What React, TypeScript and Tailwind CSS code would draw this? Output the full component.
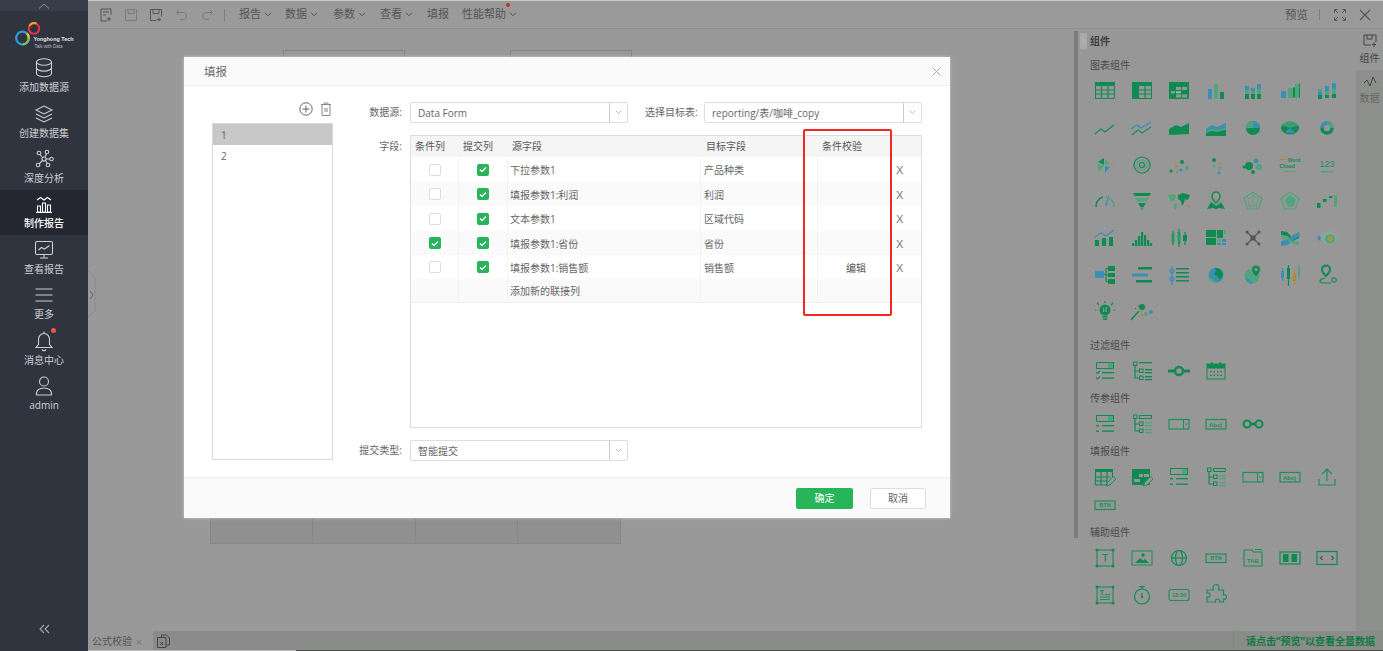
import React from "react";

const G = "#0f8b52", B = "#3a8fb5", L = "#4da67c", E = "#1b8f5c", K = "#565656", W = "#979797";
type P = { children: React.ReactNode };
const S = ({ children }: P) => (
  <svg width="24" height="24" viewBox="0 0 24 24" fill="none" stroke="none">{children}</svg>
);
const Ln = ({ d, c = G, w = 1.2 }: { d: string; c?: string; w?: number }) => <path d={d} stroke={c} strokeWidth={w} fill="none" />;
const F = ({ d, c = G }: { d: string; c?: string }) => <path d={d} fill={c} />;
const R = ({ x, y, w, h, c = G }: { x: number; y: number; w: number; h: number; c?: string }) => <rect x={x} y={y} width={w} height={h} fill={c} />;
const O = ({ x, y, r, c = G }: { x: number; y: number; r: number; c?: string }) => <circle cx={x} cy={y} r={r} fill={c} />;
const Ring = ({ x, y, r, c = G, w = 1.2 }: { x: number; y: number; r: number; c?: string; w?: number }) => <circle cx={x} cy={y} r={r} stroke={c} strokeWidth={w} fill="none" />;
const Tx = ({ x, y, s, t, c = G, b = true }: { x: number; y: number; s: number; t: string; c?: string; b?: boolean }) => (
  <text x={x} y={y} fontSize={s} fill={c} textAnchor="middle" fontWeight={b ? 700 : 400} fontFamily="Liberation Sans, sans-serif">{t}</text>
);

const DropList = () => (
  <S><rect x="3.5" y="3.5" width="17" height="6" stroke={G} /><R x={15} y={4} w={5} h={5} c={L} />
    <Ln d="M3 13l1.5 1.5L7 12M3 18.5l1.5 1.5L7 17.5" /><R x={9} y={13} w={12} h={1.3} /><R x={9} y={18.5} w={12} h={1.3} /></S>
);
const DropList2 = () => (
  <S><rect x="3.5" y="3.5" width="17" height="6" stroke={G} /><R x={15} y={4} w={5} h={5} c={L} />
    <R x={3} y={13} w={3} h={1.3} /><R x={9} y={13} w={12} h={1.3} /><R x={3} y={18.5} w={3} h={1.3} /><R x={9} y={18.5} w={12} h={1.3} /></S>
);
const TreeL = ({ thin = false }: { thin?: boolean }) => (
  <S><rect x="3.5" y="3" width="3.5" height="3.5" stroke={G} /><rect x="9.5" y="10" width="3.5" height="3.5" stroke={G} /><rect x="9.5" y="17" width="3.5" height="3.5" stroke={G} />
    <Ln d="M5 6.5V19h4.5M5 12h4.5" />
    {thin ? <rect x="9.5" y="3.5" width="12" height="3" stroke={G} /> : <R x={9} y={3} w={13} h={1.3} />}
    <R x={15} y={10} w={7} h={1.3} c={thin ? L : G} /><R x={15} y={13} w={7} h={1.3} c={thin ? L : G} /><R x={15} y={17} w={7} h={1.3} c={thin ? L : G} /><R x={15} y={20} w={7} h={1.3} c={thin ? L : G} /></S>
);
const Combo = () => (
  <S><rect x="2" y="7.5" width="20" height="9.5" stroke={E} strokeWidth="1.2" /><path d="M16.5 7.5v9.5" stroke={E} /><path d="M18.3 11.5l1.2 1.2 1.2-1.2" stroke={G} /></S>
);
const Abc = () => (
  <S><rect x="2" y="7.5" width="20" height="9.5" stroke={E} strokeWidth="1.2" /><Tx x={11.5} y={14.5} s={6} t="Abc|" c={E} /></S>
);
const Btn = ({ t = "BTN" }: { t?: string }) => (
  <S><rect x="2" y="8" width="20" height="8.5" stroke={E} strokeWidth="1.2" /><Tx x={12} y={14.2} s={5.5} t={t} c={E} /></S>
);
const Handles = ({ children }: P) => (
  <S><rect x="4" y="4" width="16" height="16" stroke={G} />{[[4, 4], [20, 4], [4, 20], [20, 20]].map(([x, y]) => <O key={x + "-" + y} x={x} y={y} r={1.5} />)}{children}</S>
);
const Globe = ({ c = G }: { c?: string }) => (
  <S><Ring x={12} y={12} r={7.5} c={c} /><ellipse cx="12" cy="12" rx="3.5" ry="7.5" stroke={c} strokeWidth="1.2" /><Ln d="M4.5 12h15" c={c} /></S>
);
const TablePen = ({ cross = false }: { cross?: boolean }) => (
  <S><R x={2} y={4} w={18} h={3} />
    {cross ? <><R x={2} y={7} w={18} h={13} /><R x={9} y={9} w={4} h={3} c={W} /><R x={14} y={9} w={5} h={3} c={W} /><R x={4} y={14} w={6} h={3} c={W} /></> :
      <Ln d="M2.5 7v13h12M2.5 12h15M2.5 16h12M8 7v13M14 7v13M19.5 7v5" />}
    <path d="M13.5 21l1-3.5 6-6 2.5 2.5-6 6z" fill={W} stroke={E} /></S>
);

const chartIcons = [
  <S><rect x="2.5" y="3.5" width="19" height="16" stroke={G} /><R x={2} y={3} w={20} h={4} /><Ln d="M2.5 11h19M2.5 15h19M8.5 7v12M15 7v12" /></S>,
  <S><rect x="2.5" y="3.5" width="19" height="16" stroke={G} /><R x={2} y={3} w={20} h={4} /><R x={2} y={3} w={7} h={17} /><Ln d="M9 11h12M9 15h12M15 7v12" /></S>,
  <S><R x={2} y={3} w={20} h={17} /><R x={9} y={8} w={5} h={3} c={W} /><R x={15} y={8} w={5} h={3} c={W} /><R x={4} y={12} w={4} h={2.5} c={W} /><R x={9} y={12} w={5} h={2.5} c="#7fb79a" /><R x={15} y={15.5} w={5} h={3} c={W} /><R x={9} y={15.5} w={5} h={3} c={W} /></S>,
  <S><R x={4} y={10} w={4} h={10} c={B} /><R x={10} y={5} w={4} h={15} c={L} /><R x={16} y={13} w={4} h={7} /></S>,
  <S><R x={4} y={7} w={4} h={4} c={B} /><R x={4} y={11} w={4} h={4} c={L} /><R x={4} y={15} w={4} h={5} /><R x={10} y={9} w={4} h={3} c={B} /><R x={10} y={12} w={4} h={3} c={L} /><R x={10} y={15} w={4} h={5} /><R x={16} y={5} w={4} h={5} c={B} /><R x={16} y={10} w={4} h={5} c={L} /><R x={16} y={15} w={4} h={5} /></S>,
  <S><R x={3} y={12} w={5} h={7} c={B} /><R x={10} y={9} w={5} h={10} c={L} /><R x={17} y={5} w={4} h={14} c={L} /><F d="M15 9l2-1v10l-2 1z" /><F d="M21 5l1-1v14l-1 1z" /></S>,
  <S><R x={3} y={13} w={4} h={3} c={B} /><R x={3} y={16} w={4} h={4} /><R x={3} y={10} w={4} h={3} c={L} /><R x={10} y={7} w={4} h={5} c={B} /><R x={10} y={12} w={4} h={4} c={L} /><R x={10} y={16} w={4} h={3} /><R x={17} y={4} w={4} h={6} c={B} /><R x={17} y={10} w={4} h={5} c={L} /><R x={17} y={15} w={4} h={4} /></S>,
  <S><Ln d="M2 18l6-5 4 3 9-7" /></S>,
  <S><Ln d="M1 13l6-4 4 3 10-6" c={B} /><Ln d="M2 19l6-5 4 3 9-6" c={E} /></S>,
  <S><F d="M2 19v-6l7-4 5 2 8-4v11z" /></S>,
  <S><F d="M2 13l6-4 5 2 9-4v6l-9 2-5-1-6 3z" c={B} /><F d="M2 16l6-3 5 1 9-2v4l-9 1-5 0-6 1z" c={L} /><F d="M2 17l6-2 5 1 9-2v6H2z" /></S>,
  <S><O x={12} y={12} r={7} /><F d="M12 5a7 7 0 0 1 7 7h-7z" c={B} /><F d="M12 12H5a7 7 0 0 1 7-7z" c={L} /></S>,
  <S><ellipse cx="12" cy="12" rx="9" ry="6.5" fill={G} /><path d="M7 16l5-4 5 4a9 6.5 0 0 1-10 0z" fill={B} /><path d="M3.5 9.5a9 6 0 0 1 17 0L12 12z" fill={L} opacity=".7" /></S>,
  <S><circle cx="12" cy="12" r="5" stroke={G} strokeWidth="3.5" /><path d="M12 7a5 5 0 0 1 5 5" stroke={L} strokeWidth="3.5" /><path d="M7 12a5 5 0 0 1 5-5" stroke={B} strokeWidth="3.5" /></S>,
  <S><F d="M5 9l6-4v7z" /><F d="M4 11l7 2-5 6z" c={L} /><F d="M12 13l5 1-5 6z" c={B} /><F d="M12 6l5 5-5 1z" c={L} /><O x={19} y={11} r={1} c="#b08a3a" /></S>,
  <S><Ring x={12} y={12} r={8} /><Ring x={12} y={12} r={5.2} c={L} /><Ring x={12} y={12} r={2.5} /></S>,
  <S><O x={4} y={18} r={1.5} /><O x={9} y={13} r={1.5} c="#b08a3a" /><O x={15} y={9} r={2} /><O x={14} y={17} r={1.5} c={B} /><O x={20} y={15} r={2.2} c={L} /><O x={10} y={19} r={1.2} c={L} /></S>,
  <S><O x={10} y={7} r={2} /><O x={10} y={13} r={1.5} c={L} /><O x={16} y={10} r={1.5} c="#b08a3a" /><O x={16} y={15} r={1.5} c={L} /><O x={15} y={20} r={1.5} c={B} /></S>,
  <S><O x={8} y={13} r={4} /><O x={15} y={8} r={2.5} c={B} /><O x={18} y={14} r={3} c={L} /><O x={3} y={14} r={1.5} /><O x={12} y={19} r={2} /></S>,
  <S><Tx x={16} y={9} s={5} t="Word" /><Tx x={9} y={15} s={5.5} t="Cloud" /><R x={2} y={6} w={6} h={1} c="#b08a3a" /><R x={6} y={18} w={12} h={1} c={L} /></S>,
  <S><Tx x={12} y={14} s={9} t="123" c={E} b={false} /><R x={6} y={18} w={12} h={1.5} c={L} /></S>,
  <S><Ln d="M3 18a9.5 9.5 0 0 1 7-10" w={1.5} /><Ln d="M13 8a9.5 9.5 0 0 1 8 10" w={1.5} c={L} /><F d="M16 5l-4 11 2 1z" c={B} /></S>,
  <S><F d="M3 4h18l-1.5 3H4.5z" /><F d="M5 9h14l-2 3.5H7z" c={L} /><F d="M8 14h8l-2.5 4h-3z" /><F d="M10 18.5h4L12 22z" c={B} /></S>,
  <S><F d="M1 6l7-1 1 3-3 5-3-2zM7 14l3 1-1 6-2-2z" c={L} /><F d="M11 6l5-2 7 2-2 5-3-1-1 4-2 3-1-5-3-2z" /><O x={21} y={17} r={1.3} c="#b08a3a" /></S>,
  <S><path d="M12 3a4 4 0 0 0-4 4c0 3 4 7 4 7s4-4 4-7a4 4 0 0 0-4-4z" stroke={G} strokeWidth="1.5" /><F d="M3 20l4-7 3 2 2 2 3-2 2-2 4 7-6-1-3 1-3-1z" /></S>,
  <S><path d="M12 3l9 6.5-3.5 10.5h-11L3 9.5z" stroke={L} strokeWidth="1.2" /><path d="M12 6.5l5.5 4-2 6.5h-7l-2-6.5z" stroke={L} strokeWidth=".8" /><path d="M12 3v9l5 8M12 12l-5 8" stroke={L} strokeWidth=".6" /></S>,
  <S><path d="M12 3l9 6.5-3.5 10.5h-11L3 9.5z" stroke={L} strokeWidth="1.2" /><F d="M12 6l6 4.5-2.5 7h-6l-2.5-6z" c={L} /></S>,
  <S><R x={2} y={14} w={3.5} h={5} /><R x={8} y={10} w={3.5} h={3} /><R x={14} y={7} w={3.5} h={2} /><R x={19} y={6} w={3} h={12} c={L} /></S>,
  <S><R x={2} y={14} w={4} h={6} /><R x={9} y={12} w={4} h={8} /><R x={16} y={11} w={4} h={9} /><Ln d="M2 11l6-4 5 3 8-6" c={B} /></S>,
  <S><R x={2} y={17} w={2.2} h={3} /><R x={5} y={14} w={2.2} h={6} /><R x={8} y={10} w={2.2} h={10} /><R x={11} y={6} w={2.2} h={14} /><R x={14} y={9} w={2.2} h={11} /><R x={17} y={14} w={2.2} h={6} /><R x={20} y={17} w={2.2} h={3} /></S>,
  <S><R x={4} y={8} w={4} h={8} c={L} /><R x={10} y={6} w={4} h={12} c={L} /><R x={16} y={9} w={4} h={6} /><Ln d="M6 5v14M12 3v18M18 6v13" /></S>,
  <S><R x={2} y={4} w={10} h={7} /><R x={2} y={12} w={10} h={7} /><R x={13} y={4} w={6} h={8} /><R x={20} y={4} w={2} h={4} c={L} /><R x={13} y={13} w={4} h={3} c={L} /><R x={18} y={13} w={4} h={3} c={B} /><R x={13} y={17} w={4} h={2} c={B} /><R x={18} y={17} w={4} h={2} c={B} /></S>,
  <S><Ln d="M6 6l12 12M18 6L6 18" c={K} /><rect x="9.5" y="9.5" width="5" height="5" fill={K} /><O x={6} y={6} r={1.5} c={K} /><O x={18} y={6} r={1.5} c={K} /><O x={6} y={18} r={1.5} c={K} /><O x={18} y={18} r={1.5} c={K} /></S>,
  <S><F d="M3 5l6 1 6 6 6-4v4l-6 3-6-5-6-1z" c={G} /><F d="M3 15l6-1 6-5 6-3v-1l1 5-7 4-6 5-6 1z" c={B} /><F d="M3 12l6 2 6 4 6 1v-3l-6-1-6-4-6-1z" c={L} /></S>,
  <S><ellipse cx="14" cy="12" rx="8" ry="7" fill="#7db5a0" opacity=".5" /><ellipse cx="15" cy="13" rx="5" ry="4.5" fill={L} /><ellipse cx="15" cy="13" rx="2.5" ry="3" fill="#a89a40" /><ellipse cx="4" cy="12" rx="1.5" ry="2.5" fill={B} /></S>,
  <S><R x={2} y={8} w={9} h={7} c={B} /><R x={15} y={3} w={7} h={5} /><R x={15} y={10} w={7} h={4} /><R x={15} y={16} w={7} h={5} /><Ln d="M11 11.5h2M13 5.5v13M13 5.5h2M13 12h2M13 18.5h2" /></S>,
  <S><R x={8} y={4} w={14} h={2.5} /><R x={2} y={10.5} w={16} h={3} c={B} /><R x={6} y={17} w={16} h={2.5} /></S>,
  <S><Ln d="M5 3v19" c={B} /><Ring x={5} y={8} r={2} c={B} /><Ring x={5} y={16} r={2} c={B} /><R x={9} y={5} w={13} h={1.5} /><R x={9} y={9} w={13} h={1.5} /><R x={9} y={13} w={13} h={1.5} /><R x={9} y={17} w={13} h={1.5} /></S>,
  <S><O x={12} y={12} r={7.5} c={B} /><F d="M11 5a7.5 7.5 0 0 1 8 7l-3 5-3-4-3-2 2-3z" /><F d="M5 14c3 1 5 3 7 5-3 1-6-1-7-5z" c={L} /></S>,
  <S><O x={11} y={13} r={7.5} c={L} /><F d="M4 15c3 0 6 2 8 6-4 0-7-2-8-6z" c={B} /><path d="M15 2a4.5 4.5 0 0 0-4.5 4.5c0 3.5 4.5 7.5 4.5 7.5s4.5-4 4.5-7.5A4.5 4.5 0 0 0 15 2z" fill={G} stroke={W} /><O x={15} y={6.5} r={1.5} c={W} /></S>,
  <S><R x={3} y={8} w={3} h={7} c={B} /><Ln d="M4.5 5v13" c={B} /><R x={9} y={5} w={3} h={11} /><Ln d="M10.5 2v21" /><R x={15} y={10} w={3} h={8} c="#b08a3a" /><Ln d="M16.5 7v15" c="#b08a3a" /><R x={20} y={5} w={2} h={9} c={L} /><Ln d="M21 2v15" c={L} /></S>,
  <S><path d="M11 2.5a4 4 0 0 0-4 4c0 2.5 4 6.5 4 6.5s4-4 4-6.5a4 4 0 0 0-4-4z" stroke={G} strokeWidth="2" /><Ln d="M10 15c-5 1-7 4-3 5h9" /><Ring x={19} y={17} r={2.2} c={E} /></S>,
  <S><circle cx="12" cy="11" r="5.5" fill={G} /><R x={9.5} y={17} w={5} h={1.5} /><R x={10} y={19.5} w={4} h={1.5} /><R x={10} y={9} w={1.2} h={4} c={W} /><R x={12.5} y={8} w={1.2} h={5} c={W} /><Ln d="M12 2v2M4 4l2 2M20 4l-2 2M2 11h1.5M22 11h-1.5" /></S>,
  <S><Ln d="M1 21L9 12" w={1.5} /><O x={12} y={8} r={3} /><O x={12} y={16} r={1.5} c="#b08a3a" /><O x={16} y={15} r={2} c={L} /><O x={21} y={13} r={2} c={B} /><Ln d="M8 6l1 2M5 9l1 1" c={K} w={.8} /></S>,
];
const filterIcons = [<DropList />, <TreeL />,
  <S><R x={1} y={10.5} w={22} h={3} /><circle cx="12" cy="12" r="4" stroke={G} strokeWidth="2.5" fill={W} /></S>,
  <S><rect x="3" y="5" width="18" height="15" stroke={G} /><R x={3} y={5} w={18} h={4.5} /><R x={7} y={3} w={1.5} h={3} /><R x={15.5} y={3} w={1.5} h={3} />{[6, 9.5, 13, 16.5].map(x => <React.Fragment key={x}><R x={x} y={12} w={1.5} h={1.5} /><R x={x} y={15.5} w={1.5} h={1.5} /></React.Fragment>)}</S>];
const paramIcons = [<DropList2 />, <TreeL thin />, <Combo />, <Abc />,
  <S><Ln d="M8 12h8" w={3} /><circle cx="6" cy="12" r="3.5" stroke={G} strokeWidth="2" fill={W} /><circle cx="18" cy="12" r="3.5" stroke={G} strokeWidth="2" fill={W} /></S>];
const fillIcons = [<TablePen />, <TablePen cross />, <DropList2 />, <TreeL thin />, <Combo />, <Abc />,
  <S><Ln d="M4 14v6h16v-6M12 16V4M7 9l5-5 5 5" c={E} /></S>, <Btn />];
const auxIcons = [
  <Handles><Tx x={12} y={16} s={11} t="T" b={false} /></Handles>,
  <S><rect x="2" y="5" width="20" height="14" stroke={E} /><O x={13} y={9} r={1.8} /><F d="M5 17l5-5 3 2.5 2-1.5 4 4z" /></S>,
  <Globe />, <Btn />,
  <S><path d="M3 20V4h8l1.5 2H21v14z" stroke={E} strokeWidth="1.2" /><R x={14} y={3} w={7} h={1} c={E} /><Tx x={12} y={17} s={6} t="TAB" c={E} /></S>,
  <S><rect x="2" y="6" width="20" height="12" stroke={G} strokeWidth="1.2" /><R x={5} y={8} w={5.5} h={8} /><R x={13.5} y={8} w={5.5} h={8} /></S>,
  <S><rect x="2" y="5.5" width="20" height="13" stroke={G} strokeWidth="1.2" /><Ln d="M7.5 10l-2 2 2 2M16.5 10l2 2-2 2" c={K} /></S>,
  <Handles><Tx x={9} y={11.5} s={7} t="T" /><R x={12} y={11} w={5} h={1} /><R x={7} y={13.5} w={10} h={1} c={E} /><R x={7} y={16} w={10} h={1} c={E} /></Handles>,
  <S><Ring x={12} y={13.5} r={7.5} /><R x={9.5} y={3} w={5} h={1.3} /><Ln d="M12 4v2M12 10v4" /><O x={12} y={14} r={1.2} /></S>,
  <S><rect x="2" y="6.5" width="20" height="11" rx="2" stroke={E} strokeWidth="1.2" /><Tx x={12} y={14.2} s={5.5} t="12:00" c={E} /></S>,
  <S><path d="M9 4.5a3 3 0 0 1 6 0c0 1-.5 1.5-.5 2.5h5v5c1-.5 3-.5 3 2s-2 2.5-3 2v3h-4c.5-1 0-3-2-3s-2.5 2-2 3H3v-5c1 .5 3 0 3-2s-2-2.5-3-2V7h6.5c0-1-.5-1.5-.5-2.5z" stroke={E} strokeWidth="1.2" /></S>,
];

const Grid = ({ items, rows }: { items: React.ReactNode[]; rows: string }) => (
  <div className={"grid grid-cols-[repeat(7,37px)] pl-[6px] " + rows}>
    {items.map((x, i) => <div key={i} className="flex items-center justify-center">{x}</div>)}
  </div>
);
const SecT = ({ t, c }: { t: string; c: string }) => <div className={"h-4 flex items-center pl-[10px] text-[10px] leading-none text-[#4a4a4a] " + c}>{t}</div>;

const navIcon: Record<string, React.ReactNode> = {
  a: <><ellipse cx="11" cy="5" rx="7.5" ry="3.3" /><path d="M3.5 5v11.5c0 1.8 3.4 3.3 7.5 3.3s7.5-1.5 7.5-3.3V5M3.5 10.8c0 1.8 3.4 3.3 7.5 3.3s7.5-1.5 7.5-3.3" /></>,
  b: <><path d="M11 3l8 4-8 4-8-4zM3 11l8 4 8-4M3 15l8 4 8-4" /></>,
  c: <><circle cx="11" cy="11" r="2" /><circle cx="6" cy="5" r="1.8" /><circle cx="14" cy="4" r="1.8" /><circle cx="5" cy="17" r="1.8" /><circle cx="15" cy="17" r="1.8" /><path d="M7 6.5l2.5 3M13.5 5.5L12 9M9.5 12.5L6 16M12.5 12.5l2 3" /><circle cx="18.5" cy="11" r="1.8" /><path d="M13 11h3.700" /></>,
  d: <><path d="M3 19.5h16M4.5 19v-6h3v6zM9.5 19v-9h3v9zM14.5 19v-7h3v7zM4 7l3.5-2.5L11 7l3.5-2.5L18 7" /></>,
  e: <><rect x="2.5" y="2.5" width="17" height="13" rx="1.5" /><path d="M5.5 11l3-2.5 3 1.5 5-3.5M7 19h8M11 15.5V19" /></>,
  f: <><path d="M2.5 5h17M2.5 11h17M2.5 17h17" /></>,
  g: <><path d="M11 1.5v2M11 3.5c-3.5 0-5.5 3-5.5 6v5L3 17.5h16l-2.5-3v-5c0-3-2-6-5.500-6zM9 19.5c.5 1.5 3.5 1.5 4 0" /></>,
  h: <><circle cx="11" cy="6.5" r="4.5" /><path d="M3.5 20c-.5-5 3-7 7.5-7s8 2 7.5 7z" /></>,
};
const NavItem = ({ k, t, active, dot }: { k: string; t: string; active?: boolean; dot?: boolean }) => (
  <div className={"h-[45.4px] flex flex-col items-center justify-center relative shrink-0 " + (active ? "bg-[#242732] text-white" : "text-[#ccced3]")}>
    <div className="relative w-[22px] h-[22px] mt-[-1px]">
      <svg width="22" height="22" viewBox="0 0 22 22" fill="none" stroke="currentColor" strokeWidth="1.1">{navIcon[k]}</svg>
      {dot && <span className="absolute right-[-1px] top-[-2px] w-[5px] h-[5px] rounded-full bg-[#f0564a]" />}
    </div>
    <div className={"text-[10px] leading-[14px] mt-[1px] " + (active ? "font-medium" : "")}>{t}</div>
  </div>
);

const Caret = () => <svg width="8" height="5" viewBox="0 0 8 5" fill="none" stroke="#555" strokeWidth="1"><path d="M1 .8l3 3 3-3" /></svg>;
const Menu = ({ t, c, caret = true }: { t: string; c: string; caret?: boolean }) => (
  <div className={"flex items-center gap-[3px] text-[11px] text-[#555] " + c}><span>{t}</span>{caret && <Caret />}</div>
);
const Tb = ({ children, c = "#555", cl }: P & { c?: string; cl: string }) => (
  <svg className={cl} width="16" height="16" viewBox="0 0 16 16" fill="none" stroke={c} strokeWidth="1">{children}</svg>
);

const Select = ({ v, w }: { v: string; w: string }) => (
  <div className={"h-[21px] border border-[#ddd] rounded-[2px] flex items-stretch bg-white " + w}>
    <div className="flex-1 pl-[7px] pt-px flex items-center text-[10px] text-[#666]">{v}</div>
    <div className="w-[18px] border-l border-[#ccc] flex items-center justify-center">
      <svg width="7" height="5" viewBox="0 0 7 5" fill="none" stroke="#bbb"><path d="M.8.8l2.7 2.7 2.7-2.7" /></svg>
    </div>
  </div>
);
const Check = ({ on }: { on: boolean }) => on ? (
  <span className="w-3 h-3 rounded-[2px] bg-[#28b55a] flex items-center justify-center">
    <svg width="8" height="7" viewBox="0 0 8 7" fill="none" stroke="#fff" strokeWidth="1.5"><path d="M1 3.5l2 2 4-4" /></svg>
  </span>
) : <span className="w-3 h-3 rounded-[2px] border border-[#ddd] bg-white" />;

const rows = [
  { a: false, s: "下拉参数1", t: "产品种类", h: "h-[25px]", e: "" },
  { a: false, s: "填报参数1:利润", t: "利润", h: "h-[24px] bg-[#fafafa]", e: "" },
  { a: false, s: "文本参数1", t: "区域代码", h: "h-[25px]", e: "" },
  { a: true, s: "填报参数1:省份", t: "省份", h: "h-[24px] bg-[#fafafa]", e: "" },
  { a: false, s: "填报参数1:销售额", t: "销售额", h: "h-[24px]", e: "编辑" },
];
const cols = "grid grid-cols-[48px_49px_193px_117px_76px_27px]";

export default function App() {
  return (
    <div className="relative w-[1383px] h-[651px] overflow-hidden flex bg-[#999] font-['Open_Sans','Noto_Sans_CJK_SC',sans-serif]">
      <aside className="w-[88px] h-full bg-[#30343f] flex flex-col shrink-0">
        <div className="h-[11px] bg-[#393d49] flex items-center justify-center">
          <svg width="12" height="6" viewBox="0 0 12 6" fill="none" stroke="#8b8e96"><path d="M1 5.5l5-4.5 5 4.5" /></svg>
        </div>
        <div className="h-[43px] relative flex items-start">
          <svg width="88" height="43" viewBox="0 0 88 43" fill="none">
            <circle cx="22.5" cy="27" r="6.3" stroke="#2b9bd8" strokeWidth="2.3" />
            <path d="M22.5 33.3a6.3 6.3 0 0 0 6.3-6.3" stroke="#7cc04b" strokeWidth="2.3" />
            <path d="M28.8 27a6.3 6.3 0 0 0-2-4.6" stroke="#f2c230" strokeWidth="2.3" />
            <circle cx="34" cy="17.5" r="5.2" stroke="#e8324a" strokeWidth="2" />
            <path d="M29.5 15a5.2 5.2 0 0 1 7-2.5" stroke="#f5a623" strokeWidth="2" />
            <text x="33.5" y="30" fontSize="5.4" fontWeight="700" fill="#e6e7ea" fontFamily="Liberation Sans, sans-serif">Yonghong Tech</text>
            <text x="34.5" y="36.5" fontSize="4.5" fill="#b8bac0" fontFamily="Liberation Sans, sans-serif">Talk with Data</text>
          </svg>
        </div>
        <div className="flex flex-col mt-[-0.5px]">
          <NavItem k="a" t="添加数据源" />
          <NavItem k="b" t="创建数据集" />
          <NavItem k="c" t="深度分析" />
          <NavItem k="d" t="制作报告" active />
          <NavItem k="e" t="查看报告" />
          <NavItem k="f" t="更多" />
          <NavItem k="g" t="消息中心" dot />
          <NavItem k="h" t="admin" />
        </div>
        <div className="mt-auto h-[27px] flex items-start justify-center">
          <svg width="11" height="10" viewBox="0 0 11 10" fill="none" stroke="#a4a6ac" strokeWidth="1.1"><path d="M5 1L1 5l4 4M10 1L6 5l4 4" /></svg>
        </div>
      </aside>

      <div className="flex-1 flex flex-col min-w-0">
        <div className="h-px bg-[#c9c9c9]" />
        <header className="h-[28px] bg-[#9a9a9a] border-b border-[#8e8e8e] flex items-center shrink-0">
          <Tb cl="ml-[10px]"><path d="M13 8V2H3v12h6M5 5h6M5 8h3M11 10v4M9 12h4" /></Tb>
          <Tb cl="ml-[9px]" c="#7b7b7b"><path d="M2.5 2.5h11v11h-11zM5 2.5v4h6v-4" /></Tb>
          <Tb cl="ml-[9px]"><path d="M2.5 2.5h11v7M2.5 2.5v11h6M5 2.5v4h6v-4M11 10.5v4M9 12.5h4" /></Tb>
          <Tb cl="ml-[10px]" c="#7b7b7b"><path d="M5 3L2.5 5.5 5 8M3 5.5h6a3.5 3.5 0 0 1 0 7H6" /></Tb>
          <Tb cl="ml-[9px]" c="#7b7b7b"><path d="M11 3l2.5 2.5L11 8M13 5.5H7a3.5 3.5 0 0 0 0 7h3" /></Tb>
          <div className="w-px h-[12px] bg-[#7f7f7f] ml-[9px]" />
          <Menu t="报告" c="ml-[14px]" />
          <Menu t="数据" c="ml-[13px]" />
          <Menu t="参数" c="ml-[15px]" />
          <Menu t="查看" c="ml-[14px]" />
          <Menu t="填报" c="ml-[14px]" caret={false} />
          <div className="relative ml-[13px]">
            <Menu t="性能帮助" c="" />
            <span className="absolute left-[44px] top-[-3px] w-[4px] h-[4px] rounded-full bg-[#b5332b]" />
          </div>
          <div className="ml-auto flex items-center">
            <span className="text-[11.5px] text-[#555]">预览</span>
            <div className="w-px h-[11px] bg-[#7f7f7f] ml-[11px]" />
            <svg className="ml-[14px]" width="12" height="12" viewBox="0 0 12 12" fill="none" stroke="#555"><path d="M.5 3.5v-3h3M11.5 3.5v-3h-3M.5 8.5v3h3M11.5 8.5v3h-3M1 1l3 3M11 1L8 4M1 11l3-3M11 11L8 8" /></svg>
            <svg className="ml-[13px] mr-[12px]" width="12" height="12" viewBox="0 0 12 12" fill="none" stroke="#555" strokeWidth="1.1"><path d="M1 1l10 10M11 1L1 11" /></svg>
          </div>
        </header>

        <div className="flex-1 flex min-h-0">
          <div className="w-[992px] relative bg-[#999]">
            <svg className="absolute left-0 top-[238px]" width="10" height="56" viewBox="0 0 10 56" fill="none" stroke="#8a8a8a"><path d="M0 4l7 6v34l-7 6" /><path d="M2 24l3 4-3 4" stroke="#666" /></svg>
            <div className="absolute left-[195px] top-[21px] w-[122px] h-[10px] border border-[#858585]" />
            <div className="absolute left-[422px] top-[21px] w-[122px] h-[10px] border border-[#858585]" />
            <div className="absolute left-[122px] top-[485px] w-[411px] h-[30px] grid grid-cols-4 bg-[#909090] border border-[#878787] divide-x divide-[#878787]">
              <div /><div /><div /><div />
            </div>
            <div className="absolute right-[2px] top-[2px] w-[4px] h-[507px] bg-[#7c7c7c]" />
          </div>
          <div className="w-[276px] bg-[#979797] relative">
            <div className="absolute left-0 top-[4px] w-[7px] h-[16px] bg-[#a9a9a9] flex items-center justify-center">
              <svg width="4" height="8" viewBox="0 0 4 8" fill="none" stroke="#bbb"><path d="M.5.5L3.5 4 .5 7.5" /></svg>
            </div>
            <div className="h-[24px] flex items-center pl-[10px] text-[10px] font-bold text-[#3e3e3e]">组件</div>
            <SecT t="图表组件" c="mt-[4px]" />
            <Grid items={chartIcons} rows="auto-rows-[36.7px]" />
            <SecT t="过滤组件" c="mt-[7px]" />
            <Grid items={filterIcons} rows="auto-rows-[36px]" />
            <SecT t="传参组件" c="mt-[1px]" />
            <Grid items={paramIcons} rows="auto-rows-[36px]" />
            <SecT t="填报组件" c="mt-[1px] mb-[4px]" />
            <Grid items={fillIcons} rows="auto-rows-[28px]" />
            <SecT t="辅助组件" c="mt-[5px]" />
            <Grid items={auxIcons} rows="auto-rows-[36.7px]" />
          </div>
          <div className="w-[27px] bg-[#8d8f8d] flex flex-col">
            <div className="h-[41px] bg-[#979797] flex flex-col items-center pt-[5px]">
              <svg width="14" height="13" viewBox="0 0 14 13" fill="none" stroke="#444"><path d="M8 11H1V1h12v7M4 1v4h5V1M11 8v5M9 10.5h4" /></svg>
              <span className="text-[10px] leading-[14px] text-[#444] mt-[4px]">组件</span>
            </div>
            <div className="flex flex-col items-center pt-[6px]">
              <svg width="14" height="11" viewBox="0 0 14 11" fill="none" stroke="#444"><path d="M1 7l3-3 3 6 3-9 3 6" /></svg>
              <span className="text-[10px] leading-[14px] text-[#666] mt-[4px]">数据</span>
            </div>
          </div>
        </div>

        <footer className="h-[19px] bg-[#8a8c8a] flex items-stretch shrink-0">
          <div className="w-[65px] bg-[#989898] flex items-center pl-[4px] pt-px text-[10px] text-[#555]">公式校验<span className="ml-[4px] text-[11px] leading-none text-[#777]">×</span></div>
          <div className="ml-[4px] flex items-center">
            <svg width="13" height="14" viewBox="0 0 13 14" fill="none" stroke="#444"><path d="M4.5 3V1h5l3 3v7H9M.5 3.5h8.5v10H.5zM3.5 8l2.5 3M6 8l-2.5 3" /></svg>
          </div>
          <div className="ml-auto w-[150px] border-l border-[#858785] flex items-center pl-[12px] pt-px text-[10px] font-bold text-[#0d7a40] whitespace-nowrap">请点击“预览”以查看全量数据</div>
        </footer>
        <div className="h-px flex shrink-0">
          <div className="w-[208px] bg-[#bdbdbd]" /><div className="flex-1 bg-[#4a4c4a]" />
        </div>
      </div>

      <div className="absolute left-[184px] top-[57px] w-[766px] h-[461px] bg-white flex flex-col shadow-[0_0_3px_rgba(255,255,255,0.5)]">
        <div className="h-[29px] bg-[#fafafa] border-b border-[#eeeeee] flex items-center justify-between pl-[20px] pr-[9px] pt-px shrink-0">
          <span className="text-[11.5px] text-[#666]">填报</span>
          <svg width="9" height="9" viewBox="0 0 9 9" fill="none" stroke="#aaa"><path d="M.5.5l8 8M8.5.5l-8 8" /></svg>
        </div>
        <div className="flex-1 flex min-h-0">
          <div className="w-[149px] pl-[28px] pt-[16px]">
            <div className="h-[21px] flex items-start justify-end gap-[7px] pr-px">
              <svg width="14" height="14" viewBox="0 0 14 14" fill="none" stroke="#666"><circle cx="7" cy="7" r="6.2" /><path d="M7 3.5v7M3.5 7h7" /></svg>
              <svg width="12" height="14" viewBox="0 0 12 14" fill="none" stroke="#888"><path d="M1 2.5h10M4 2.5V1h4v1.5M2 2.5v11h8v-11M5 6v4M7 6v4" /></svg>
            </div>
            <div className="w-[121px] h-[337px] border border-[#d9d9d9] text-[10px] text-[#666]">
              <div className="h-[21px] bg-[#c8c8c8] flex items-center pl-[8px] pt-px">1</div>
              <div className="h-[21px] flex items-center pl-[8px] pt-px">2</div>
            </div>
          </div>
          <div className="flex-1 pt-[16px] flex flex-col items-start">
            <div className="flex items-center">
              <div className="w-[69px] text-right text-[10px] text-[#666]">数据源:</div>
              <Select v="Data Form" w="ml-[8px] w-[218px]" />
              <div className="w-[51px] ml-[17px] text-[10px] text-[#666] whitespace-nowrap">选择目标表:</div>
              <Select v="reporting/表/咖啡_copy" w="ml-[8px] w-[218px]" />
            </div>
            <div className="flex mt-[12px]">
              <div className="w-[69px] text-right text-[10px] leading-[22px] text-[#666]">字段:</div>
              <div className="ml-[8px] w-[512px] h-[293px] border border-[#dddddd] text-[10px] text-[#666]">
                <div className={cols + " h-[21px] bg-[#f5f5f5] items-center text-[#555]"}>
                  <div className="pl-[4px]">条件列</div><div className="pl-[4px]">提交列</div><div className="pl-[4px]">源字段</div><div className="pl-[5px]">目标字段</div><div className="pl-[4px]">条件校验</div><div />
                </div>
                {rows.map(r => (
                  <div key={r.s} className={cols + " items-stretch " + r.h}>
                    <div className="flex items-center justify-center border-r border-[#f3f3f3]"><Check on={r.a} /></div>
                    <div className="flex items-center justify-center border-r border-[#f3f3f3]"><Check on /></div>
                    <div className="flex items-center pl-[2px] pt-[2px] border-r border-[#f3f3f3]">{r.s}</div>
                    <div className="flex items-center pl-[3px] pt-[2px] border-r border-[#f3f3f3]">{r.t}</div>
                    <div className="flex items-center justify-center pt-[2px] text-[#555]">{r.e}</div>
                    <div className="flex items-center pl-[2px] pt-[2px] text-[11px] text-[#777] font-['Liberation_Sans',sans-serif]">X</div>
                  </div>
                ))}
                <div className={cols + " h-[24px] bg-[#fafafa] border-b border-[#eee] items-stretch"}>
                  <div className="border-r border-[#f0f0f0]" /><div className="border-r border-[#f0f0f0]" />
                  <div className="flex items-center pl-[2px] pt-[2px] border-r border-[#f0f0f0]">添加新的联接列</div>
                  <div className="border-r border-[#f0f0f0]" /><div /><div />
                </div>
              </div>
            </div>
            <div className="flex items-center mt-[12px]">
              <div className="w-[69px] text-right text-[10px] text-[#666]">提交类型:</div>
              <Select v="智能提交" w="ml-[8px] w-[218px]" />
            </div>
          </div>
        </div>
        <div className="h-[41px] bg-[#fafafa] border-t border-[#eeeeee] flex items-center justify-end pr-[24px] gap-[17px] shrink-0">
          <div className="w-[57px] h-[21px] rounded-[2px] bg-[#28b55a] text-white text-[10px] flex items-center justify-center">确定</div>
          <div className="w-[56px] h-[21px] rounded-[2px] bg-white border border-[#dddddd] text-[#666] text-[10px] flex items-center justify-center">取消</div>
        </div>
      </div>

      <div className="absolute left-[803px] top-[129px] w-[89px] h-[187px] border-2 border-[#f5281e] rounded-[2px]" />
    </div>
  );
}
